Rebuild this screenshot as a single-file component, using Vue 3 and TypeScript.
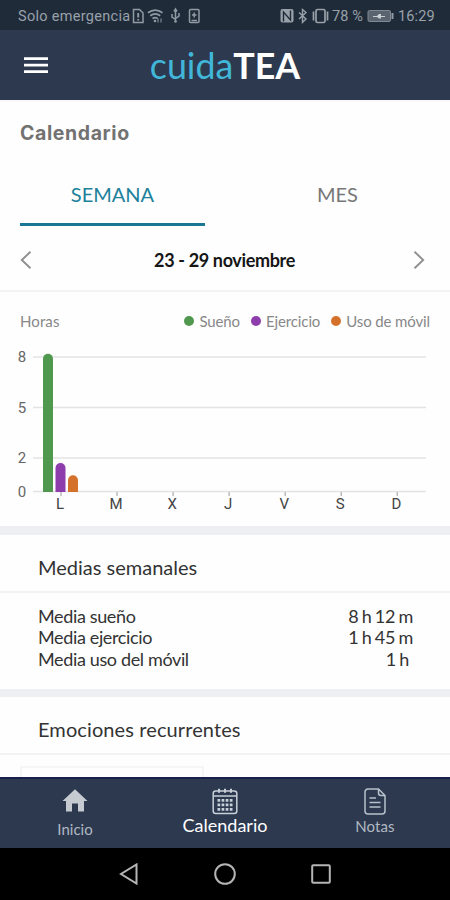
<script setup lang="ts">
interface Series {
  name: string
  color: string
  hours: number
}

const series: Series[] = [
  { name: 'Sueño', color: '#51984f', hours: 8.2 },
  { name: 'Ejercicio', color: '#8e3dad', hours: 1.7 },
  { name: 'Uso de móvil', color: '#d4722c', hours: 0.97 },
]

const days: string[] = ['L', 'M', 'X', 'J', 'V', 'S', 'D']
const gridHours: number[] = [8, 5, 2, 0]

const averages = [
  { label: 'Media sueño', value: '8 h 12 m' },
  { label: 'Media ejercicio', value: '1 h 45 m' },
  { label: 'Media uso del móvil', value: '1 h', short: true },
]

const baseY = 151.5
const hourY = (h: number): number => baseY - h * 16.8
const dayX = (i: number): number => 61 + i * 56.05

function barPath(s: Series, i: number): string {
  const x = 43 + i * 12.5
  const top = hourY(s.hours)
  return `M${x} ${baseY + 0.5}V${top + 5}a5 5 0 0 1 10 0V${baseY + 0.5}Z`
}
</script>

<template>
  <main class="phone">
    <div class="status">
      <span class="carrier">Solo emergencia</span>
      <svg class="status-left" width="70" height="18" viewBox="0 0 70 18" fill="none" stroke="#909aa4" stroke-width="1.5">
        <path d="M2.500 2.500h6l3.500 3.500v9.500H2.500z" />
        <path d="M7.200 6v4.500M7.200 12v1.600" stroke-width="1.900" />
        <path d="M17 5.800q7.200-5.500 14.500 0M19.200 8.800q5-3.800 10 0M21.500 11.600q2.600-2 5.200 0" stroke-width="1.700" />
        <circle cx="24" cy="14" r="1.300" fill="#909aa4" stroke="none" />
        <path d="M27 15.500v-4M30 11.500v4" stroke-width="1" />
        <path d="M44.500 3v12M41 7v3l3.500 2.500M48 6v3l-3.500 2.500M43 4.500l1.500-2.500 1.500 2.500" />
        <circle cx="44.500" cy="14.500" r="1.300" fill="#909aa4" stroke="none" />
        <rect x="58.500" y="2.500" width="9.500" height="13" rx="1" />
        <path d="M63.200 5.500v5M61 8h4.500M60.500 13.500h5.500" />
      </svg>
      <svg class="status-right" width="53" height="18" viewBox="0 0 53 18" fill="none" stroke="#98a1aa" stroke-width="1.400">
        <rect x="1.500" y="2" width="13" height="13.500" rx="2" fill="#98a1aa" stroke="none" />
        <path d="M4.500 14.500V5l7 8V3.500" stroke="#202b39" stroke-width="1.400" />
        <path d="M20 5.500l7 6.500-3.500 3.300V2.500L27 5.500 20 12" />
        <rect x="37" y="2.500" width="9" height="13" rx="1.500" stroke-width="1.700" />
        <path d="M34.500 4.500v9M48.500 4.500v9" stroke-width="1.700" />
      </svg>
      <span class="percent">78 %</span>
      <svg class="battery" width="28" height="18" viewBox="0 0 28 18">
        <rect x="1" y="3.500" width="22.500" height="11" rx="1.500" fill="#5a6470" stroke="#7f8993" />
        <path d="M6 9h4l2-2h2v2h4v1h-4v1.500h-2L10 10H6z" fill="#c9ced3" />
        <path d="M25.500 6v6" stroke="#909aa4" stroke-width="2" />
      </svg>
      <span class="clock">16:29</span>
    </div>

    <header class="topbar">
      <svg class="burger" width="24" height="18" viewBox="0 0 24 18">
        <path d="M0 2.700h24M0 9.200h24M0 15.700h24" stroke="#fff" stroke-width="2.800" />
      </svg>
      <h1 class="logo"><span class="logo-light">cuida</span><b>TEA</b></h1>
    </header>

    <section class="calendar">
      <h2 class="page-title">Calendario</h2>
      <nav class="tabs">
        <div class="tab active"><span>SEMANA</span></div>
        <div class="tab"><span>MES</span></div>
      </nav>
      <div class="week">
        <svg width="12" height="20" viewBox="0 0 12 20" fill="none" stroke="#8f8f8f" stroke-width="1.900"><path d="M10.500 1.700L1.800 10l8.700 8.300" /></svg>
        <strong>23 - 29 noviembre</strong>
        <svg width="12" height="20" viewBox="0 0 12 20" fill="none" stroke="#8f8f8f" stroke-width="1.900"><path d="M1.500 1.700L10.200 10l-8.700 8.300" /></svg>
      </div>
    </section>

    <section class="chart">
      <div class="legend">
        <span class="unit">Horas</span>
        <span v-for="s in series" :key="s.name" class="key">
          <i :style="{ background: s.color }"></i><span>{{ s.name }}</span>
        </span>
      </div>
      <svg class="plot" width="450" height="186" viewBox="0 0 450 186">
        <g v-for="h in gridHours" :key="h">
          <path :d="`M33 ${hourY(h)}H426`" class="grid" />
          <text x="22" :y="hourY(h) + 5" text-anchor="middle" class="axis">{{ h }}</text>
        </g>
        <g v-for="(d, i) in days" :key="d">
          <path :d="`M${dayX(i)} 152v4`" class="tick" />
          <text :x="dayX(i) - 1" y="169" text-anchor="middle" class="axis day">{{ d }}</text>
        </g>
        <path v-for="(s, i) in series" :key="s.name" :d="barPath(s, i)" :fill="s.color" />
      </svg>
    </section>

    <section class="block averages">
      <h3>Medias semanales</h3>
      <dl>
        <div v-for="a in averages" :key="a.label" class="row">
          <dt>{{ a.label }}</dt>
          <dd :class="{ short: a.short }">{{ a.value }}</dd>
        </div>
      </dl>
    </section>

    <section class="block emotions">
      <h3 class="wide">Emociones recurrentes</h3>
      <div class="emotion-card"></div>
    </section>

    <nav class="bottom">
      <div class="item home">
        <svg width="26" height="24" viewBox="0 0 26 24"><path d="M13 1.300L25.500 13H22v10.500h-6v-8h-6v8H4V13H.5z" fill="#c5cbd1" /></svg>
        <span>Inicio</span>
      </div>
      <div class="item current">
        <svg width="26" height="27" viewBox="0 0 26 27" fill="none" stroke="#c7d0d9" stroke-width="1.500">
          <rect x="1.200" y="3" width="23.600" height="22.500" rx="2.500" />
          <path d="M1.500 8h23" />
          <path d="M7 .8v4M13 .8v4M19 .8v4" stroke-width="2" />
          <path d="M5.500 12.300h15M5.500 16.800h15M5.500 21.300h15" stroke-width="2.700" stroke-dasharray="2.700 1.400" />
        </svg>
        <span>Calendario</span>
      </div>
      <div class="item notes">
        <svg width="22" height="27" viewBox="0 0 22 27" fill="none" stroke="#b7c1cc" stroke-width="1.500">
          <path d="M14.500 1H4a3 3 0 0 0-3 3v19a3 3 0 0 0 3 3h14a3 3 0 0 0 3-3V7.500zV5a2.500 2.500 0 0 0 2.500 2.500H21" />
          <path d="M5.500 10H12M5.500 14.500h11M5.500 19h11" />
        </svg>
        <span>Notas</span>
      </div>
    </nav>

    <div class="system">
      <svg width="20" height="22" viewBox="0 0 20 22"><path d="M17.500 1.500v19L2 11z" /></svg>
      <svg width="22" height="22" viewBox="0 0 22 22"><circle cx="11" cy="11" r="9.800" /></svg>
      <svg width="20" height="20" viewBox="0 0 20 20"><rect x="1.200" y="1.200" width="17.600" height="17.600" rx="1" /></svg>
    </div>
  </main>
</template>

<style>
body {
  margin: 0;
  background: #fff;
}
</style>

<style scoped>
.phone {
  width: 450px;
  height: 900px;
  overflow: hidden;
  display: flex;
  flex-direction: column;
  background: #fefefe;
  font-family: Lato, 'Liberation Sans', sans-serif;
  color: #333;
}
.phone > * {
  flex: none;
  box-sizing: border-box;
}
h1, h2, h3, dl, dd {
  margin: 0;
  font-weight: 400;
}
svg {
  display: block;
  flex: none;
}
.status {
  height: 30px;
  display: flex;
  align-items: center;
  padding: 2px 15px 0 18px;
  background: #202b39;
  color: #98a1aa;
  font: 14.5px/28px Roboto, sans-serif;
  white-space: nowrap;
}
.status span {
  position: relative;
  top: 1px;
}
.carrier {
  width: 113px;
  letter-spacing: 0.3px;
}
.status-left {
  margin-right: 78px;
}
.percent {
  width: 34px;
  letter-spacing: 0.1px;
}
.battery {
  margin-left: 1px;
  margin-right: 3px;
}
.clock {
  letter-spacing: 0.15px;
}
.topbar {
  height: 70px;
  display: grid;
  grid-template-columns: 24px 1fr 24px;
  align-items: center;
  padding: 0 24px;
  background: #2d394f;
}
.logo {
  text-align: center;
  font-size: 35.8px;
  line-height: 71px;
  height: 70px;
  color: #fff;
}
.logo-light {
  color: #41b6d8;
}
.calendar {
  height: 192px;
  border-bottom: 2px solid #f3f3f4;
  border-top: 2px solid #f8f8f8;
}
.page-title {
  padding: 18px 20px 0;
  font: 700 19.5px/26px Inter, sans-serif;
  letter-spacing: 0.6px;
  color: #727272;
}
.tabs {
  display: grid;
  grid-template-columns: 185px 185px;
  gap: 40px;
  padding: 18px 20px 0;
}
.tab {
  height: 59px;
  display: flex;
  justify-content: center;
  font-size: 20px;
  line-height: 61px;
  color: #777;
  border-bottom: 3px solid transparent;
}
.tab.active {
  color: #20819b;
  border-color: #1b7796;
}
.week {
  height: 66px;
  display: flex;
  align-items: center;
  justify-content: space-between;
  padding: 1px 25px 0 20px;
}
.week strong {
  font-size: 18px;
  letter-spacing: -0.35px;
  padding-left: 4px;
  color: #161616;
}
.chart {
  height: 234px;
}
.legend {
  height: 42px;
  padding: 0 20px;
  display: flex;
  align-items: flex-end;
  gap: 11px;
  font-size: 15px;
  line-height: 21px;
  color: #888;
  letter-spacing: -0.12px;
}
.legend > * {
  margin-bottom: 2px;
}
.legend .unit {
  margin-right: auto;
  letter-spacing: 0.1px;
}
.key {
  display: flex;
  align-items: center;
  gap: 5px;
}
.key i {
  width: 10px;
  height: 10px;
  margin-top: -2px;
  border-radius: 50%;
}
.plot {
  margin-top: 6px;
}
.grid {
  stroke: #e3e3e3;
  stroke-width: 1.5;
}
.tick {
  stroke: #bbb;
  stroke-width: 1.5;
}
.axis {
  font-family: Roboto, sans-serif;
  font-size: 15px;
  fill: #666;
}
.day {
  fill: #444;
}
.block {
  border-top: 9px solid #eeeff2;
}
.block h3 {
  height: 58px;
  padding: 4px 38px 0;
  box-sizing: border-box;
  border-bottom: 2px solid #f3f3f4;
  font-size: 20px;
  line-height: 56px;
}
.block h3.wide {
  letter-spacing: 0.1px;
}
.averages {
  height: 163px;
}
.averages dl {
  padding: 13px 37px 0 38px;
}
.row {
  display: flex;
  justify-content: space-between;
  font-size: 18px;
  line-height: 21.4px;
  letter-spacing: -0.36px;
}
.row dd {
  word-spacing: -1.2px;
  letter-spacing: -0.2px;
}
.row .short {
  padding-right: 4px;
}
.emotions {
  height: 88px;
  border-top-width: 8px;
}
.emotion-card {
  width: 184px;
  height: 12px;
  box-sizing: border-box;
  margin: 11px 0 0 20px;
  border: 2px solid #f6f6f7;
  border-bottom: 0;
}
.bottom {
  height: 71px;
  display: grid;
  grid-template-columns: repeat(3, 150px);
  background: #2d394f;
  border-top: 2px solid #17204a;
}
.item {
  display: flex;
  flex-direction: column;
  align-items: center;
  padding-top: 9px;
  font-size: 15px;
  line-height: 20px;
  color: #b0b8c2;
}
.home span {
  margin-top: 7px;
}
.notes span {
  margin-top: 1px;
  letter-spacing: 0.1px;
}
.current span {
  font-size: 18px;
  color: #fff;
}
.system {
  height: 52px;
  display: flex;
  align-items: center;
  justify-content: center;
  gap: 75px;
  background: #000;
}
.system svg {
  fill: none;
  stroke: #b5b5b5;
  stroke-width: 2;
}
</style>
